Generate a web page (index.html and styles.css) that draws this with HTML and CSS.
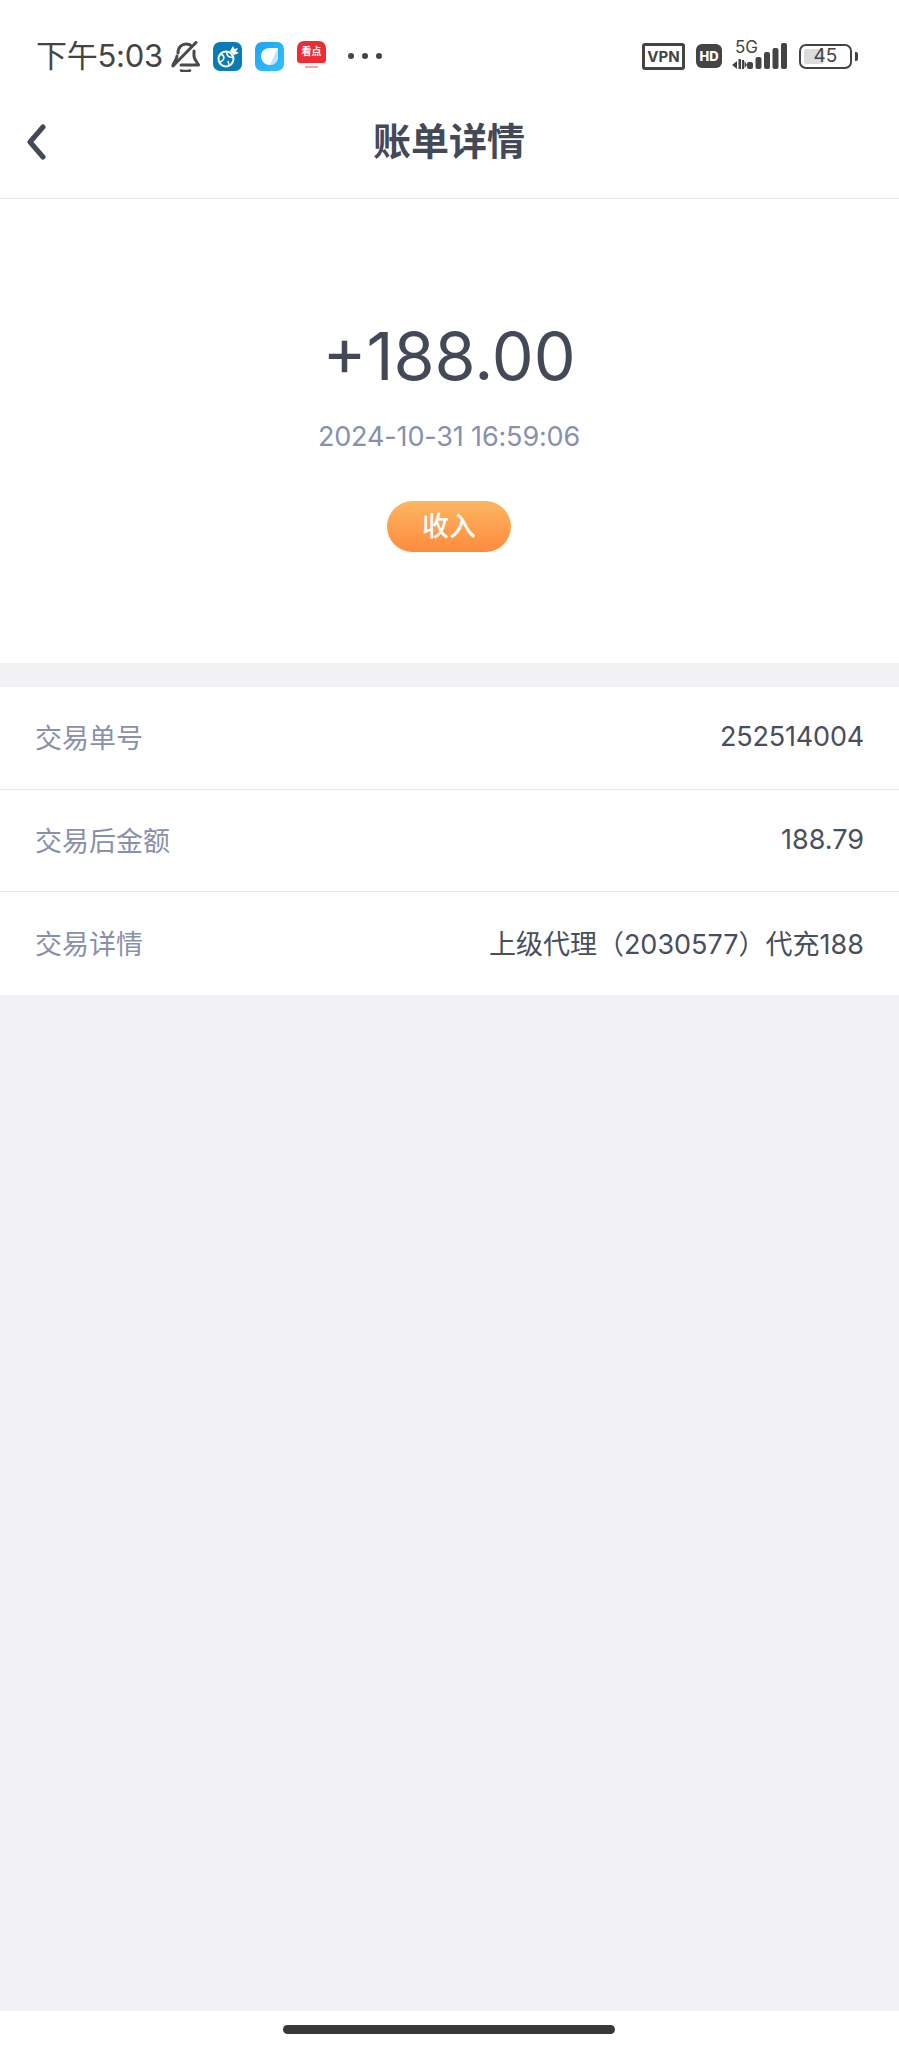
FILE: index.html
```html
<!DOCTYPE html>
<html lang="zh-CN">
<head>
  <meta charset="UTF-8" />
  <meta name="viewport" content="width=device-width, initial-scale=1.0">
  <title>账单详情</title>
  <link rel="stylesheet" href="styles.css">
</head>
<body>

  <!-- Status bar -->
  <div class="status-bar">
    <div class="status-left">
      <span class="clock">下午5:03</span>
      <svg class="bell" width="29" height="31" viewBox="0 0 29 31" fill="none" stroke="#4a4a4a" stroke-width="3" stroke-linecap="round" stroke-linejoin="round">
        <path d="M7 12 C7 6 11 3 15 3 C17 3 19 3.500 20.500 5"/>
        <path d="M23 10 V15 C23 18 26 21 27.500 24 H10"/>
        <path d="M6 15 C6 18 3 21 2 24"/>
        <path d="M2 25 L25 1.500"/>
        <path d="M10 29.500 C12 30 17 30 19 29.500" stroke-width="2.600"/>
      </svg>
      <svg class="app-icon" width="29" height="29" viewBox="0 0 29 29">
        <rect width="29" height="29" rx="7" fill="#0a7cb5"/>
        <circle cx="13" cy="17" r="7.500" fill="none" stroke="#fff" stroke-width="2"/>
        <path d="M8 12 C12 14 12 18 7 20 M14 10 C13 14 17 16 20 15 M15 19 L16 23" fill="none" stroke="#fff" stroke-width="1.500"/>
        <path d="M17 9 L20 4 L21.500 7 L25 6 L23 9.500 L26 11 L21 13 Z" fill="#fff"/>
      </svg>
      <svg class="app-icon" width="29" height="29" viewBox="0 0 29 29">
        <defs>
          <linearGradient id="blueTile" x1="0" y1="0" x2="1" y2="1">
            <stop offset="0" stop-color="#1aa4f5"/>
            <stop offset="1" stop-color="#35c0fb"/>
          </linearGradient>
        </defs>
        <rect width="29" height="29" rx="7" fill="url(#blueTile)"/>
        <path d="M6 14 C6 9 10 6 15 6 H23 V15 C23 20 19 23 14.500 23 C10 23 6 19 6 14 Z" fill="#fff"/>
        <path d="M23 6 V15 C23 20 19 23 14.500 23 C18 18 20 11 23 6 Z" fill="#bfe6fc"/>
      </svg>
      <div class="red-app">
        <span class="red-tile">看点</span>
        <span class="red-sub"></span>
      </div>
      <span class="more-dots"><i></i><i></i><i></i></span>
    </div>
    <div class="status-right">
      <span class="vpn">VPN</span>
      <span class="hd">HD</span>
      <div class="signal">
        <span class="five-g">5G</span>
        <svg width="56" height="28" viewBox="0 0 56 28" fill="#444">
          <path d="M0 23 L5 19 V27 Z M6.500 17 H9 V27 H6.500 Z M10 18 H12 V27 H10 Z M12.500 19 L15 23 L12.500 26 Z"/>
          <rect x="15" y="20" width="6" height="7" rx="2"/>
          <rect x="23.500" y="15" width="6" height="12" rx="2"/>
          <rect x="32" y="10" width="6" height="17" rx="2"/>
          <rect x="40.500" y="6" width="6" height="21" rx="2"/>
          <rect x="49" y="1" width="6" height="26" rx="2"/>
        </svg>
      </div>
      <div class="battery">
        <div class="battery-body">
          <span class="battery-fill"></span>
          <span class="battery-num">45</span>
        </div>
        <span class="battery-cap"></span>
      </div>
    </div>
  </div>

  <!-- Title bar -->
  <header class="nav-bar">
    <svg class="back" width="24" height="36" viewBox="0 0 24 36" fill="none" stroke="#444957" stroke-width="5" stroke-linecap="round" stroke-linejoin="round">
      <path d="M19 3 L6 18 L19 33"/>
    </svg>
    <h1>账单详情</h1>
  </header>

  <section class="summary">
    <div class="amount">+188.00</div>
    <div class="time">2024-10-31 16:59:06</div>
    <span class="tag">收入</span>
  </section>

  <section class="detail-list">
    <div class="detail-row">
      <span class="label">交易单号</span>
      <span class="value num">252514004</span>
    </div>
    <div class="detail-row">
      <span class="label">交易后金额</span>
      <span class="value">188.79</span>
    </div>
    <div class="detail-row">
      <span class="label">交易详情</span>
      <span class="value">上级代理（2030577）代充188</span>
    </div>
  </section>

  <div class="spacer"></div>

  <footer class="home-area">
    <span class="home-bar"></span>
  </footer>

</body>
</html>
```

FILE: styles.css
```css
* {
  box-sizing: border-box;
}

body {
  margin: 0;
  width: 899px;
  height: 2048px;
  display: flex;
  flex-direction: column;
  background: #f2f2f4;
  font-family: 'Inter', 'Noto Sans CJK SC', sans-serif;
  color: #444957;
  overflow: hidden;
}

.status-bar {
  height: 100px;
  background: #fff;
  display: flex;
  justify-content: space-between;
  align-items: center;
  padding: 12px 41px 0 36px;
}

.status-left {
  display: flex;
  align-items: center;
}

.clock {
  width: 127px;
  font-size: 31px;
  line-height: 36px;
  color: #444;
  letter-spacing: -0.25px;
  white-space: nowrap;
}

.bell {
  margin-left: 8px;
  flex: none;
}

.app-icon {
  margin-left: 13px;
  flex: none;
}

.red-app {
  margin-left: 13px;
  width: 29px;
  height: 30px;
  display: flex;
  flex-direction: column;
  align-items: center;
}

.red-tile {
  display: block;
  width: 29px;
  height: 22px;
  background: #ef2c33;
  border-radius: 7px 7px 3px 3px;
  color: #fff;
  font-size: 10px;
  font-weight: 700;
  line-height: 21px;
  text-align: center;
}

.red-sub {
  margin-top: 3px;
  width: 13px;
  height: 2px;
  background: #f4a3a6;
}

.more-dots {
  margin-left: 22px;
  display: flex;
  gap: 8px;
}

.more-dots i {
  width: 6px;
  height: 6px;
  border-radius: 50%;
  background: #444;
}

.status-right {
  display: flex;
  align-items: center;
}

.vpn {
  width: 43px;
  height: 27px;
  border: 3px solid #444;
  border-radius: 3px;
  font-size: 15px;
  font-weight: 700;
  line-height: 21px;
  text-align: center;
  color: #444;
}

.hd {
  margin-left: 11px;
  width: 26px;
  height: 24px;
  border-radius: 6px;
  background: #444;
  color: #fff;
  font-size: 13px;
  font-weight: 800;
  line-height: 24px;
  text-align: center;
}

.signal {
  position: relative;
  margin-left: 10px;
  width: 56px;
  height: 28px;
}

.five-g {
  position: absolute;
  left: 3px;
  top: -4px;
  font-size: 17px;
  line-height: 18px;
  color: #444;
}

.battery {
  margin-left: 11px;
  display: flex;
  align-items: center;
}

.battery-body {
  position: relative;
  width: 53px;
  height: 25px;
  border: 2.5px solid #444;
  border-radius: 7px;
  text-align: center;
  font-size: 19px;
  line-height: 20px;
  color: #444;
}

.battery-fill {
  position: absolute;
  left: 3px;
  top: 3px;
  bottom: 3px;
  width: 20px;
  border-radius: 2px;
  background: #dcdcdc;
}

.battery-num {
  position: relative;
}

.battery-cap {
  margin-left: 3px;
  width: 3px;
  height: 9px;
  border-radius: 0 2px 2px 0;
  background: #444;
}

.nav-bar {
  position: relative;
  height: 99px;
  padding-right: 1px;
  background: #fff;
  border-bottom: 1.5px solid #e6e6e8;
  display: flex;
  align-items: center;
  justify-content: center;
}

.nav-bar h1 {
  margin: 0 0 21px;
  font-size: 38px;
  font-weight: 600;
  color: #444957;
}

.back {
  position: absolute;
  left: 24px;
  top: 24px;
}

.summary {
  height: 464px;
  padding-top: 117px;
  padding-right: 1px;
  background: #fff;
  display: flex;
  flex-direction: column;
  align-items: center;
}

.amount {
  font-size: 66.5px;
  line-height: 80px;
  font-weight: 400;
  color: #444957;
}

.time {
  margin-top: 23px;
  font-size: 27px;
  line-height: 36px;
  letter-spacing: -0.15px;
  color: #8790ae;
}

.tag {
  margin-top: 46px;
  width: 124px;
  height: 51px;
  border-radius: 26px;
  background: linear-gradient(180deg, #fdb660, #fd8b3f);
  color: #fff;
  font-size: 27px;
  font-weight: 500;
  line-height: 51px;
  text-align: center;
}

.detail-list {
  margin-top: 24px;
  background: #fff;
}

.detail-row {
  height: 102.7px;
  padding: 0 35px 2px;
  display: flex;
  justify-content: space-between;
  align-items: center;
  font-size: 27px;
  border-bottom: 1.5px solid #ebebed;
}

.detail-row:last-child {
  border-bottom: none;
}

.label {
  color: #8a90ab;
}

.value {
  color: #494e5c;
}

.value.num {
  letter-spacing: -0.2px;
}

.spacer {
  flex: 1;
}

.home-area {
  height: 37px;
  padding-top: 14px;
  padding-right: 1px;
  background: #fff;
  display: flex;
  justify-content: center;
}

.home-bar {
  width: 332px;
  height: 9px;
  border-radius: 5px;
  background: #383838;
}
```
